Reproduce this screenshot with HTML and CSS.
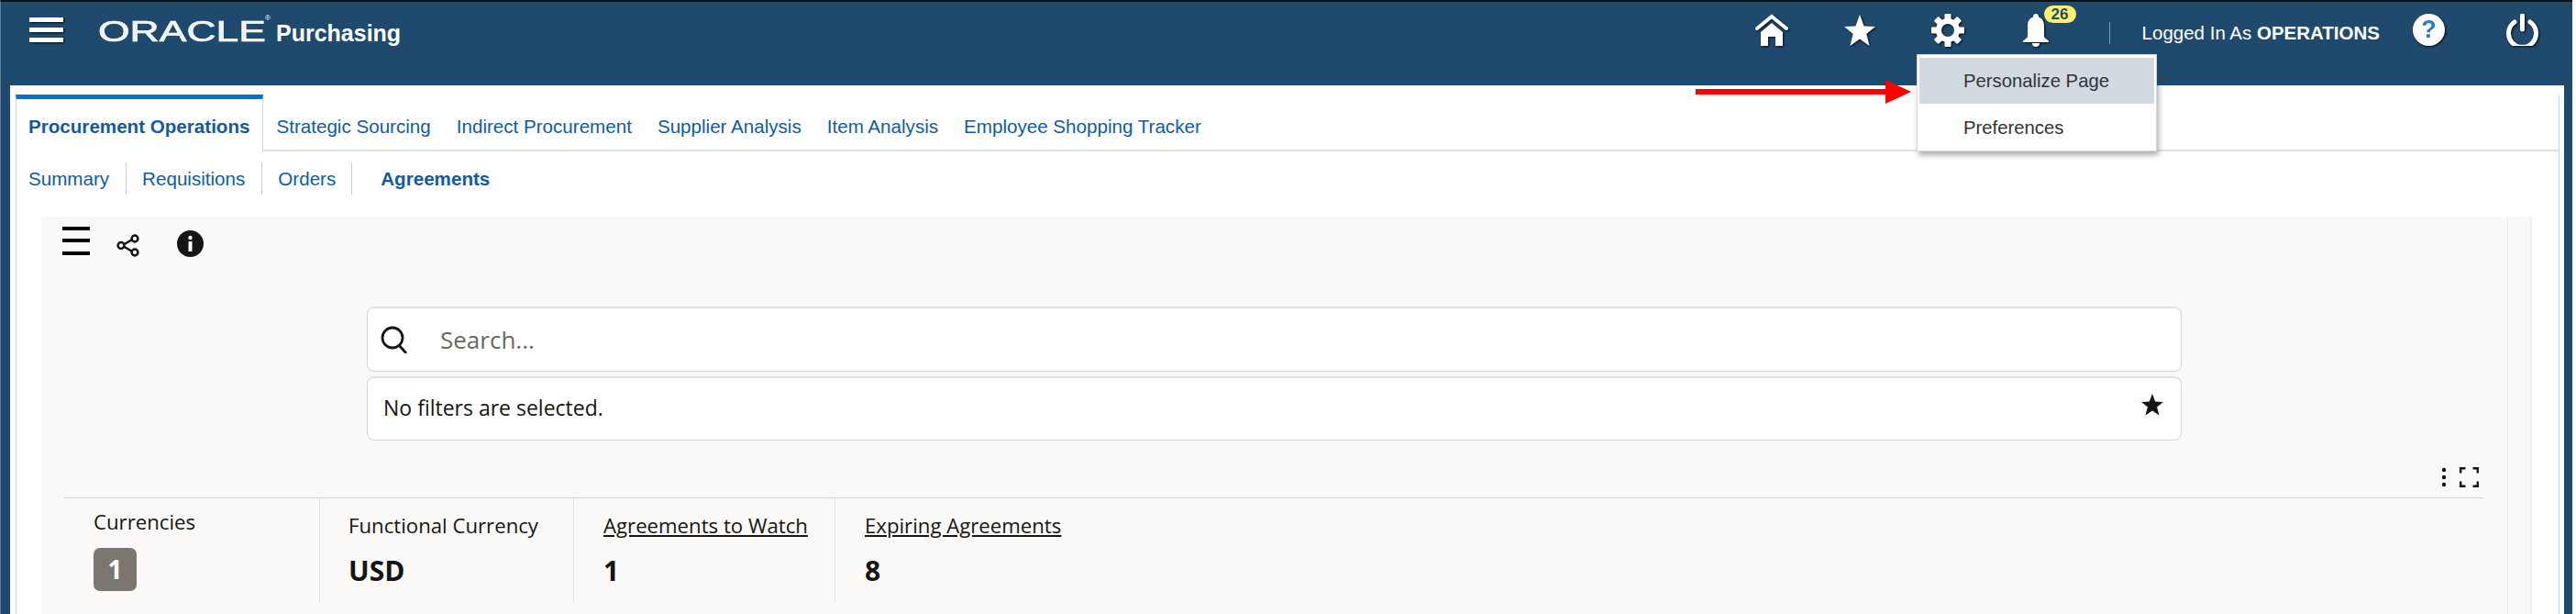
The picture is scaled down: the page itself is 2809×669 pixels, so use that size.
FILE: index.html
```html
<!DOCTYPE html>
<html lang="en">
<head>
<meta charset="utf-8">
<title>Oracle Purchasing</title>
<link rel="stylesheet" href="styles.css">
</head>
<body>
<header class="topbar">
  <svg class="ic ic-burger" viewBox="0 0 37 27"><rect width="37" height="5" y="0"/><rect width="37" height="5" y="11"/><rect width="37" height="5" y="22"/></svg>
  <div class="logo"><span class="logo-word">ORACLE</span><span class="logo-reg">®</span></div>
  <div class="product">Purchasing</div>
  <div class="spacer"></div>
  <svg class="ic ic-home" viewBox="0 0 36 36"><path class="st" d="M2 16 18 3l16 13"/><path d="M6 20 18 10l12 10v15h-8V25h-8v10H6z"/></svg>
  <svg class="ic ic-star" viewBox="0 0 34 34"><path d="M17 0l4.600 12.600L34 13l-9.700 8 3.300 13L17 26.600 6.400 34l3.300-13L0 13l12.400-.4z"/></svg>
  <svg class="ic ic-gear" viewBox="0 0 36 36">
    <circle class="ring" cx="18" cy="18" r="10"/>
    <rect x="14.500" y="0" width="7" height="7" rx="1"/><rect x="14.500" y="29" width="7" height="7" rx="1"/>
    <rect x="0" y="14.500" width="7" height="7" rx="1"/><rect x="29" y="14.500" width="7" height="7" rx="1"/>
    <rect x="14.500" y="0" width="7" height="7" rx="1" transform="rotate(45 18 18)"/><rect x="14.500" y="29" width="7" height="7" rx="1" transform="rotate(45 18 18)"/>
    <rect x="0" y="14.500" width="7" height="7" rx="1" transform="rotate(45 18 18)"/><rect x="29" y="14.500" width="7" height="7" rx="1" transform="rotate(45 18 18)"/>
  </svg>
  <div class="bell">
    <svg class="ic ic-bell" viewBox="0 0 28 36"><path d="M14 0c2.500 0 3 2 3 3.500 4.500 1.500 6 5.500 6 10V24c0 2 2 3.500 5 5.500V31H0v-1.500C3 27.500 5 26 5 24V13.500c0-4.500 1.500-8.500 6-10C11 2 11.500 0 14 0z"/><path d="M10 32h8c0 2.500-1.500 4-4 4s-4-1.500-4-4z"/></svg>
    <span class="badge">26</span>
  </div>
  <div class="vsep"></div>
  <div class="user">Logged In As <b>OPERATIONS</b></div>
  <div class="help"><span>?</span></div>
  <svg class="ic ic-power" viewBox="0 0 35 35"><path class="st" d="M9 9a15 15 0 1 0 17 0"/><path class="st" d="M17.500 2v15"/></svg>
</header>

<main class="sheet">
  <div class="frame">
    <nav class="tabs">
      <a class="tab active">Procurement Operations</a>
      <a class="tab">Strategic Sourcing</a>
      <a class="tab">Indirect Procurement</a>
      <a class="tab">Supplier Analysis</a>
      <a class="tab">Item Analysis</a>
      <a class="tab">Employee Shopping Tracker</a>
    </nav>
    <nav class="subtabs">
      <a class="sub s1">Summary</a>
      <a class="sub s2">Requisitions</a>
      <a class="sub s3">Orders</a>
      <a class="sub s4">Agreements</a>
    </nav>
    <section class="canvas">
      <div class="canvas-inner">
        <div class="toolbar">
          <svg class="t-burger" viewBox="0 0 30 31"><rect width="30" height="4" y="0"/><rect width="30" height="4" y="13"/><rect width="30" height="4" y="27"/></svg>
          <svg class="t-share" viewBox="0 0 25 25"><path class="ln" d="M19 5 6 12.500 19 20"/><circle class="nd" cx="20" cy="5" r="3.400"/><circle class="nd" cx="5" cy="12.500" r="3.400"/><circle class="nd" cx="20" cy="20" r="3.400"/></svg>
          <svg class="t-info" viewBox="0 0 29 29"><circle cx="14.500" cy="14.500" r="14.500"/><circle class="wh" cx="14.500" cy="8" r="2.200"/><rect class="wh" x="12.500" y="12" width="4" height="11"/></svg>
        </div>
        <div class="searchbox">
          <svg class="s-icon" viewBox="0 0 32 30"><circle cx="13" cy="13" r="11"/><path d="M20 21l8 9"/></svg>
          <span class="s-ph">Search...</span>
        </div>
        <div class="filterbox">
          <span class="f-text">No filters are selected.</span>
          <svg class="f-star" viewBox="0 0 24 24"><path d="M12 0l3.200 8.500 8.800.4-6.900 5.600 2.400 9L12 18.500 4.500 23.500l2.400-9L0 8.900l8.800-.4z"/></svg>
        </div>
        <div class="kpi-tools">
          <svg class="k-dots" viewBox="0 0 6 22"><circle cx="3" cy="3" r="2.200"/><circle cx="3" cy="11" r="2.200"/><circle cx="3" cy="19" r="2.200"/></svg>
          <svg class="k-full" viewBox="0 0 21 22"><path d="M1.200 6.500V1.200H6.500M14.500 1.200h5.300V6.500M1.200 15.500v5.300H6.500M14.500 20.800h5.300V15.500"/></svg>
        </div>
        <div class="kpis">
          <div class="kpi k1"><div class="k-label up">Currencies</div><div class="k-badge">1</div></div>
          <div class="kpi k2"><div class="k-label">Functional Currency</div><div class="k-value">USD</div></div>
          <div class="kpi k3"><div class="k-label link">Agreements to Watch</div><div class="k-value">1</div></div>
          <div class="kpi k4"><div class="k-label link">Expiring Agreements</div><div class="k-value">8</div></div>
        </div>
      </div>
    </section>
  </div>
</main>

<div class="arrow"><div class="arrow-shaft"></div><div class="arrow-head"></div></div>
<div class="menu">
  <div class="menu-item hi">Personalize Page</div>
  <div class="menu-item">Preferences</div>
</div>
</body>
</html>
```

FILE: styles.css
```css
html { background: #fff; }
html, body { margin: 0; height: 669px; overflow: hidden; }
body {
  background: #1f4a6e;
  border-top: 2px solid #111;
  border-left: 1px solid #5d7a93;
  box-sizing: border-box;
  width: 2805px;
  font-family: "Liberation Sans", Arial, sans-serif;
  position: relative;
}
.topbar {
  height: 91px;
  display: flex;
  align-items: flex-start;
  color: #fff;
  box-sizing: border-box;
  padding-left: 31px;
}
.ic { fill: #fff; display: block; filter: drop-shadow(1px 1px 1px rgba(0,0,0,.85)); flex: none; }
.ic .st { fill: none; stroke: #fff; stroke-width: 4; stroke-linecap: round; }
.ic-burger { width: 37px; height: 27px; margin-top: 17px; }
.logo { width: 195px; margin-left: 38px; margin-top: 15px; height: 34px; position: relative; }
.logo-word {
  display: inline-block;
  font-size: 32px;
  line-height: 34px;
  transform: scaleX(1.39);
  transform-origin: left center;
  color: #eef2f5;
  -webkit-text-stroke: .7px #fff;
}
.logo-reg { position: absolute; left: 182px; top: -3px; font-size: 8px; line-height: 12px; }
.product { font-size: 25px; font-weight: bold; line-height: 30px; margin-top: 19px; margin-left: -1px; }
.spacer { flex: 1; }
.ic-home { width: 36px; height: 36px; margin-top: 13px; }
.ic-star { width: 34px; height: 34px; margin-top: 14px; margin-left: 61px; }
.ic-gear { width: 36px; height: 36px; margin-top: 13px; margin-left: 61px; }
.ic-gear .ring { fill: none; stroke: #fff; stroke-width: 6; }
.bell { position: relative; width: 28px; height: 36px; margin-top: 13px; margin-left: 64px; }
.ic-bell { width: 28px; height: 36px; }
.badge {
  position: absolute;
  left: 23px;
  top: -9px;
  width: 35px;
  height: 19px;
  border-radius: 10px;
  background: #fbf06e;
  color: #1f4a6e;
  font-size: 17px;
  font-weight: bold;
  line-height: 19px;
  text-align: center;
}
.vsep { width: 1px; height: 24px; background: #7d99b0; margin-top: 22px; margin-left: 66px; }
.user { font-size: 20.500px; line-height: 26px; margin-top: 21px; margin-left: 35px; white-space: nowrap; }
.help {
  width: 35px; height: 35px; border-radius: 50%;
  background: #fff;
  color: #2d7cc9;
  margin-top: 13px; margin-left: 36px;
  font-size: 27px; font-weight: bold; line-height: 35px; text-align: center;
  filter: drop-shadow(1px 1px 1px rgba(0,0,0,.85));
}
.ic-power { width: 35px; height: 35px; margin-top: 13px; margin-left: 67px; margin-right: 37px; }
.ic-power .st { stroke-width: 5; }

.sheet {
  background: #fff;
  margin: 0 9px 0 10px;
  height: 576px;
  padding: 10px 0 0 6px;
  box-sizing: border-box;
}
.frame {
  width: 2774px;
  height: 566px;
  box-sizing: border-box;
  border-right: 1px solid #ccd6e0;
  display: flex;
  flex-direction: column;
  position: relative;
}
.tabs {
  height: 62px;
  display: flex;
  box-sizing: border-box;
  border-bottom: 2px solid #dfe4ea;
  font-size: 20.600px;
}
.tab {
  color: #0f5ca3;
  padding: 0 14px;
  line-height: 70px;
  white-space: nowrap;
  height: 60px;
  box-sizing: border-box;
}
.tab.active {
  font-weight: bold;
  color: #155a9c;
  border-top: 5px solid #0572ce;
  border-left: 1px solid #ccd6e0;
  border-right: 1px solid #ccd6e0;
  background: #fff;
  height: 62px;
  line-height: 60px;
  padding-left: 13px;
}
.tabs .tab:nth-child(2) { padding-left: 14px; }
.subtabs {
  height: 71px;
  flex: none;
  display: flex;
  align-items: flex-start;
  padding: 12px 0 0 0;
  box-sizing: border-box;
  border-left: 1px solid #ccd6e0;
  font-size: 20.600px;
}
.sub { height: 35px; line-height: 35px; color: #0f5ca3; box-sizing: border-box; white-space: nowrap; }
.s1 { padding: 0 18px 0 13px; border-right: 1px solid #c5d0db; }
.s2 { padding: 0 18px 0 17px; border-right: 1px solid #c5d0db; }
.s3 { padding: 0 17px; border-right: 1px solid #c5d0db; }
.s4 { padding-left: 31px; font-weight: bold; color: #155a9c; }

.canvas {
  flex: 1;
  border-left: 1px solid #ccd6e0;
  padding-left: 27px;
  min-height: 0;
}
.canvas-inner {
  background: #faf9f7;
  width: 2716px;
  height: 100%;
  box-sizing: border-box;
  border-right: 2px solid #efefee;
  box-shadow: inset -24px 0 0 #faf9f7, inset -25px 0 0 #ececeb;
  color: #161513;
  font-family: "Open Sans", "Noto Sans", sans-serif;
}
.toolbar { height: 98px; display: flex; align-items: flex-start; padding: 11px 0 0 23px; box-sizing: border-box; }
.t-burger { width: 30px; height: 31px; fill: #000; }
.t-share { width: 25px; height: 25px; margin: 8px 0 0 29px; }
.t-share .ln { fill: none; stroke: #161513; stroke-width: 2.500; }
.t-share .nd { fill: #faf9f7; stroke: #161513; stroke-width: 2.500; }
.t-info { width: 29px; height: 29px; margin: 4px 0 0 41px; fill: #161513; }
.t-info .wh { fill: #fff; }

.searchbox, .filterbox {
  margin-left: 355px;
  width: 1979px;
  background: #fff;
  border: 1px solid #d6d5d3;
  border-top: 2px solid #e3e2e0;
  border-radius: 8px;
  box-sizing: border-box;
  display: flex;
  align-items: center;
}
.searchbox { height: 71px; padding-left: 14px; }
.s-icon { width: 32px; height: 30px; fill: none; stroke: #161513; stroke-width: 2.800; }
.s-ph { color: #6a6865; font-size: 26px; margin-left: 33px; }
.filterbox { height: 70px; margin-top: 5px; padding: 0 19px 0 17px; justify-content: space-between; }
.f-text { font-size: 23px; color: #161513; margin-bottom: 3px; }
.f-star { width: 24px; height: 24px; fill: #161513; margin-bottom: 9px; }

.kpi-tools {
  margin: 26px 0 0 25px;
  width: 2638px;
  height: 37px;
  box-sizing: border-box;
  border-bottom: 1px solid #d2d1cf;
  display: flex;
  justify-content: flex-end;
  align-items: flex-start;
  padding-right: 5px;
  padding-top: 3px;
}
.k-dots { width: 6px; height: 22px; fill: #161513; margin-right: 14px; }
.k-full { width: 21px; height: 22px; fill: none; stroke: #161513; stroke-width: 2.400; }

.kpis { display: flex; margin-left: 25px; height: 113px; }
.kpi { box-sizing: border-box; padding-left: 32px; border-right: 1px solid #e2e1df; }
.k1 { width: 279px; }
.k2 { width: 277px; padding-left: 31px; }
.k3 { width: 285px; }
.k4 { border-right: 0; }
.k-label { font-size: 22.200px; line-height: 30px; padding-top: 15px; white-space: nowrap; }
.k-label.up { padding-top: 11px; }
.k-label.link { text-decoration: underline; }
.k-value { font-size: 30px; font-weight: bold; line-height: 40px; margin-top: 14px; }
.k-badge {
  width: 47px; height: 47px; margin-top: 13px;
  background: #7b7670; color: #fff;
  border-radius: 7px;
  font-size: 28px; font-weight: bold; line-height: 47px; text-align: center;
}

.menu {
  position: absolute;
  left: 2089px;
  top: 57px;
  width: 262px;
  height: 106px;
  box-sizing: border-box;
  padding: 3px 2px;
  background: #fff;
  border: 1px solid #d3dbe3;
  box-shadow: 2px 4px 6px rgba(60,70,85,.45);
  font-size: 20.300px;
  color: #333;
}
.menu-item { height: 50px; line-height: 50px; padding-left: 48px; }
.menu-item.hi { background: #d1d9e1; margin-bottom: 1px; }
.arrow { position: absolute; left: 1848px; top: 85px; display: flex; align-items: center; height: 26px; }
.arrow-shaft { width: 207px; height: 6px; background: #f00; }
.arrow-head {
  width: 0; height: 0;
  border-left: 28px solid #f00;
  border-top: 13px solid transparent;
  border-bottom: 13px solid transparent;
}
```
